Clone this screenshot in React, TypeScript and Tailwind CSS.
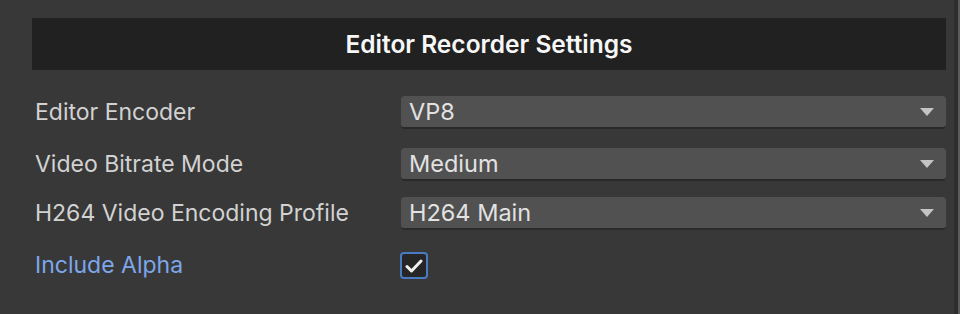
type DropdownRowType = {
  label: string;
  value: string;
  spacing: string;
};

const rows: DropdownRowType[] = [
  { label: "Editor Encoder", value: "VP8", spacing: "mt-[26px]" },
  { label: "Video Bitrate Mode", value: "Medium", spacing: "mt-[19px]" },
  { label: "H264 Video Encoding Profile", value: "H264 Main", spacing: "mt-[16px]" },
];

const Dropdown = ({ value }: { value: string }) => {
  return (
    <div className="flex-1 h-[33px] flex items-center justify-between rounded-[4px] bg-[#515151] border-b-2 border-[#2a2a2a] pl-[8px] pr-[12px]">
      <span className="text-[23.5px] text-[#e2e2e2] leading-none">{value}</span>
      {/* unity style arrow */}
      <svg width="14" height="8" viewBox="0 0 14 8">
        <polygon points="0,0 14,0 7,8" fill="#c4c4c4" />
      </svg>
    </div>
  );
};

const App = () => {
  return (
    <div
      className="w-[960px] h-[314px] bg-[#383838] flex overflow-hidden"
      style={{ fontFamily: "Inter, 'Noto Sans', sans-serif" }}
    >
      <div className="flex-1 pl-[32px] pr-[8px]">
        <div className="mt-[18px] h-[52px] bg-[#212121] flex items-center justify-center">
          <span className="text-[24.5px] font-semibold text-[#f7f7f7]">
            Editor Recorder Settings
          </span>
        </div>

        {rows.map((row, index) => (
          <div key={index} className={`${row.spacing} h-[33px] flex items-center`}>
            <div className="w-[369px] pl-[3px] text-[23px] leading-none text-[#d2d2d2]">
              {row.label}
            </div>
            <Dropdown value={row.value} />
          </div>
        ))}

        <div className="mt-[22px] flex items-center h-[27px]">
          <div className="w-[368px] pl-[3px] text-[23px] leading-none text-[#7ca7ea]">
            Include Alpha
          </div>
          <div className="w-[28px] h-[27px] rounded-[4px] border-2 border-[#4a7ac2] bg-[#262626] flex items-center justify-center">
            <svg width="18" height="14" viewBox="0 0 18 14">
              <polyline
                points="2,7.5 6.5,12 16,2"
                fill="none"
                stroke="#f0f0f0"
                strokeWidth="3"
                strokeLinecap="round"
                strokeLinejoin="round"
              />
            </svg>
          </div>
        </div>
      </div>
      <div className="w-[4px] bg-[#2e2e2e]" />
      <div className="w-[2px] bg-[#5c5c5c]" />
    </div>
  );
};

export default App;
